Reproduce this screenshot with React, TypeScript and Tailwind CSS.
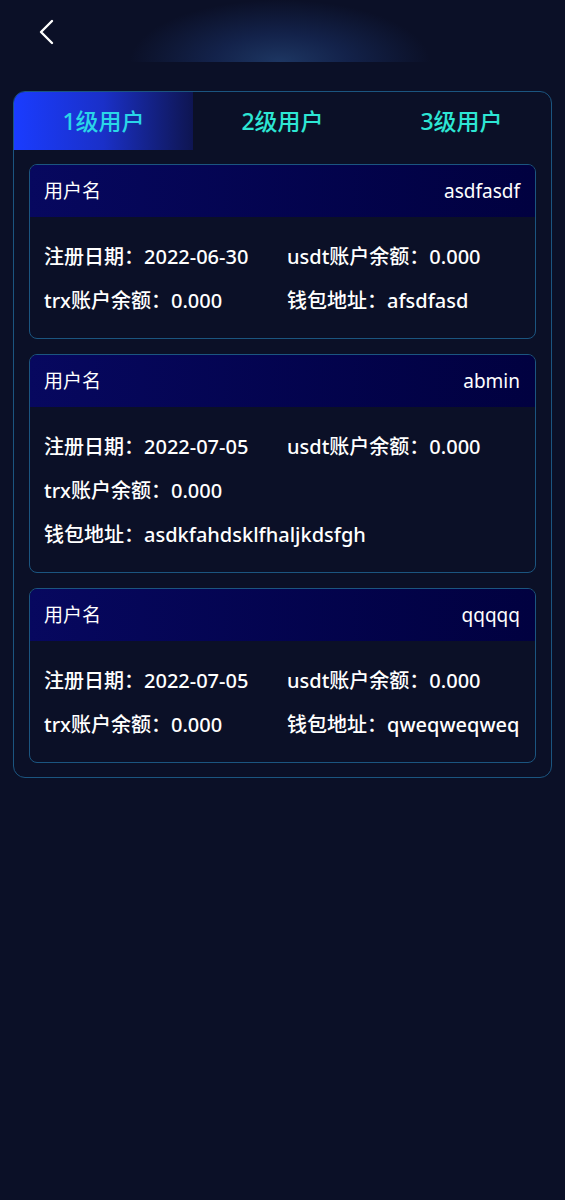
import React from "react";

type User = {
  name: string;
  date: string;
  usdt: string;
  trx: string;
  wallet: string;
};

const users: User[] = [
  { name: "asdfasdf", date: "2022-06-30", usdt: "0.000", trx: "0.000", wallet: "afsdfasd" },
  { name: "abmin", date: "2022-07-05", usdt: "0.000", trx: "0.000", wallet: "asdkfahdsklfhaljkdsfgh" },
  { name: "qqqqq", date: "2022-07-05", usdt: "0.000", trx: "0.000", wallet: "qweqweqweq" },
];

const font = {
  fontFamily: '"Noto Sans", "Noto Sans CJK SC", sans-serif',
};

function Card({ u }: { u: User }) {
  return (
    <div className="rounded-[8px] border border-[#1b5580] overflow-hidden">
      <div className="h-[52px] flex items-center justify-between pl-[14px] pr-[15px] bg-gradient-to-r from-[#07085f] to-[#010140] text-white text-[19px]">
        <span>用户名</span>
        <span>{u.name}</span>
      </div>
      <div className="pl-[14px] pr-[4px] pt-[18px] pb-[15px] flex flex-wrap text-white text-[20px] font-medium">
        <div className="min-w-[243px] h-[44px] flex items-center">注册日期：{u.date}</div>
        <div className="min-w-[243px] h-[44px] flex items-center">usdt账户余额：{u.usdt}</div>
        <div className="min-w-[243px] h-[44px] flex items-center">trx账户余额：{u.trx}</div>
        <div className="min-w-[243px] h-[44px] flex items-center">钱包地址：{u.wallet}</div>
      </div>
    </div>
  );
}

export default function App() {
  return (
    <div className="min-h-[1200px] w-full bg-[#0b1027]" style={font}>
      <div className="relative h-[62px] flex items-center overflow-hidden">
        <div className="absolute left-[130px] top-0 w-[300px] h-[62px] bg-[radial-gradient(ellipse_50%_100%_at_50%_100%,#1d3662_0%,#13224a_45%,rgba(11,16,39,0)_100%)]" />
        <button className="relative ml-[36px] mt-[2px] w-[20px] h-[28px] flex items-center justify-center">
          <svg width="18" height="26" viewBox="0 0 18 26" fill="none">
            <path d="M15 2 L4 13 L15 24" stroke="#ffffff" strokeWidth="2.4" strokeLinecap="round" strokeLinejoin="round" />
          </svg>
        </button>
      </div>
      <div className="mt-[29px] mx-[13px] rounded-[12px] border border-[#1b5580] overflow-hidden">
        <div className="flex h-[58px] text-[23px] font-medium text-[#2de6d4]">
          <div className="flex-1 flex items-center justify-center bg-gradient-to-r from-[#1a3cff] via-[#1a30c8] to-[#0e1552] text-[#2ad6e8]">
            1级用户
          </div>
          <div className="flex-1 flex items-center justify-center">2级用户</div>
          <div className="flex-1 flex items-center justify-center">3级用户</div>
        </div>
        <div className="px-[15px] pt-[14px] pb-[14px] flex flex-col gap-[15px]">
          {users.map((u, i) => (
            <Card key={i} u={u} />
          ))}
        </div>
      </div>
    </div>
  );
}
